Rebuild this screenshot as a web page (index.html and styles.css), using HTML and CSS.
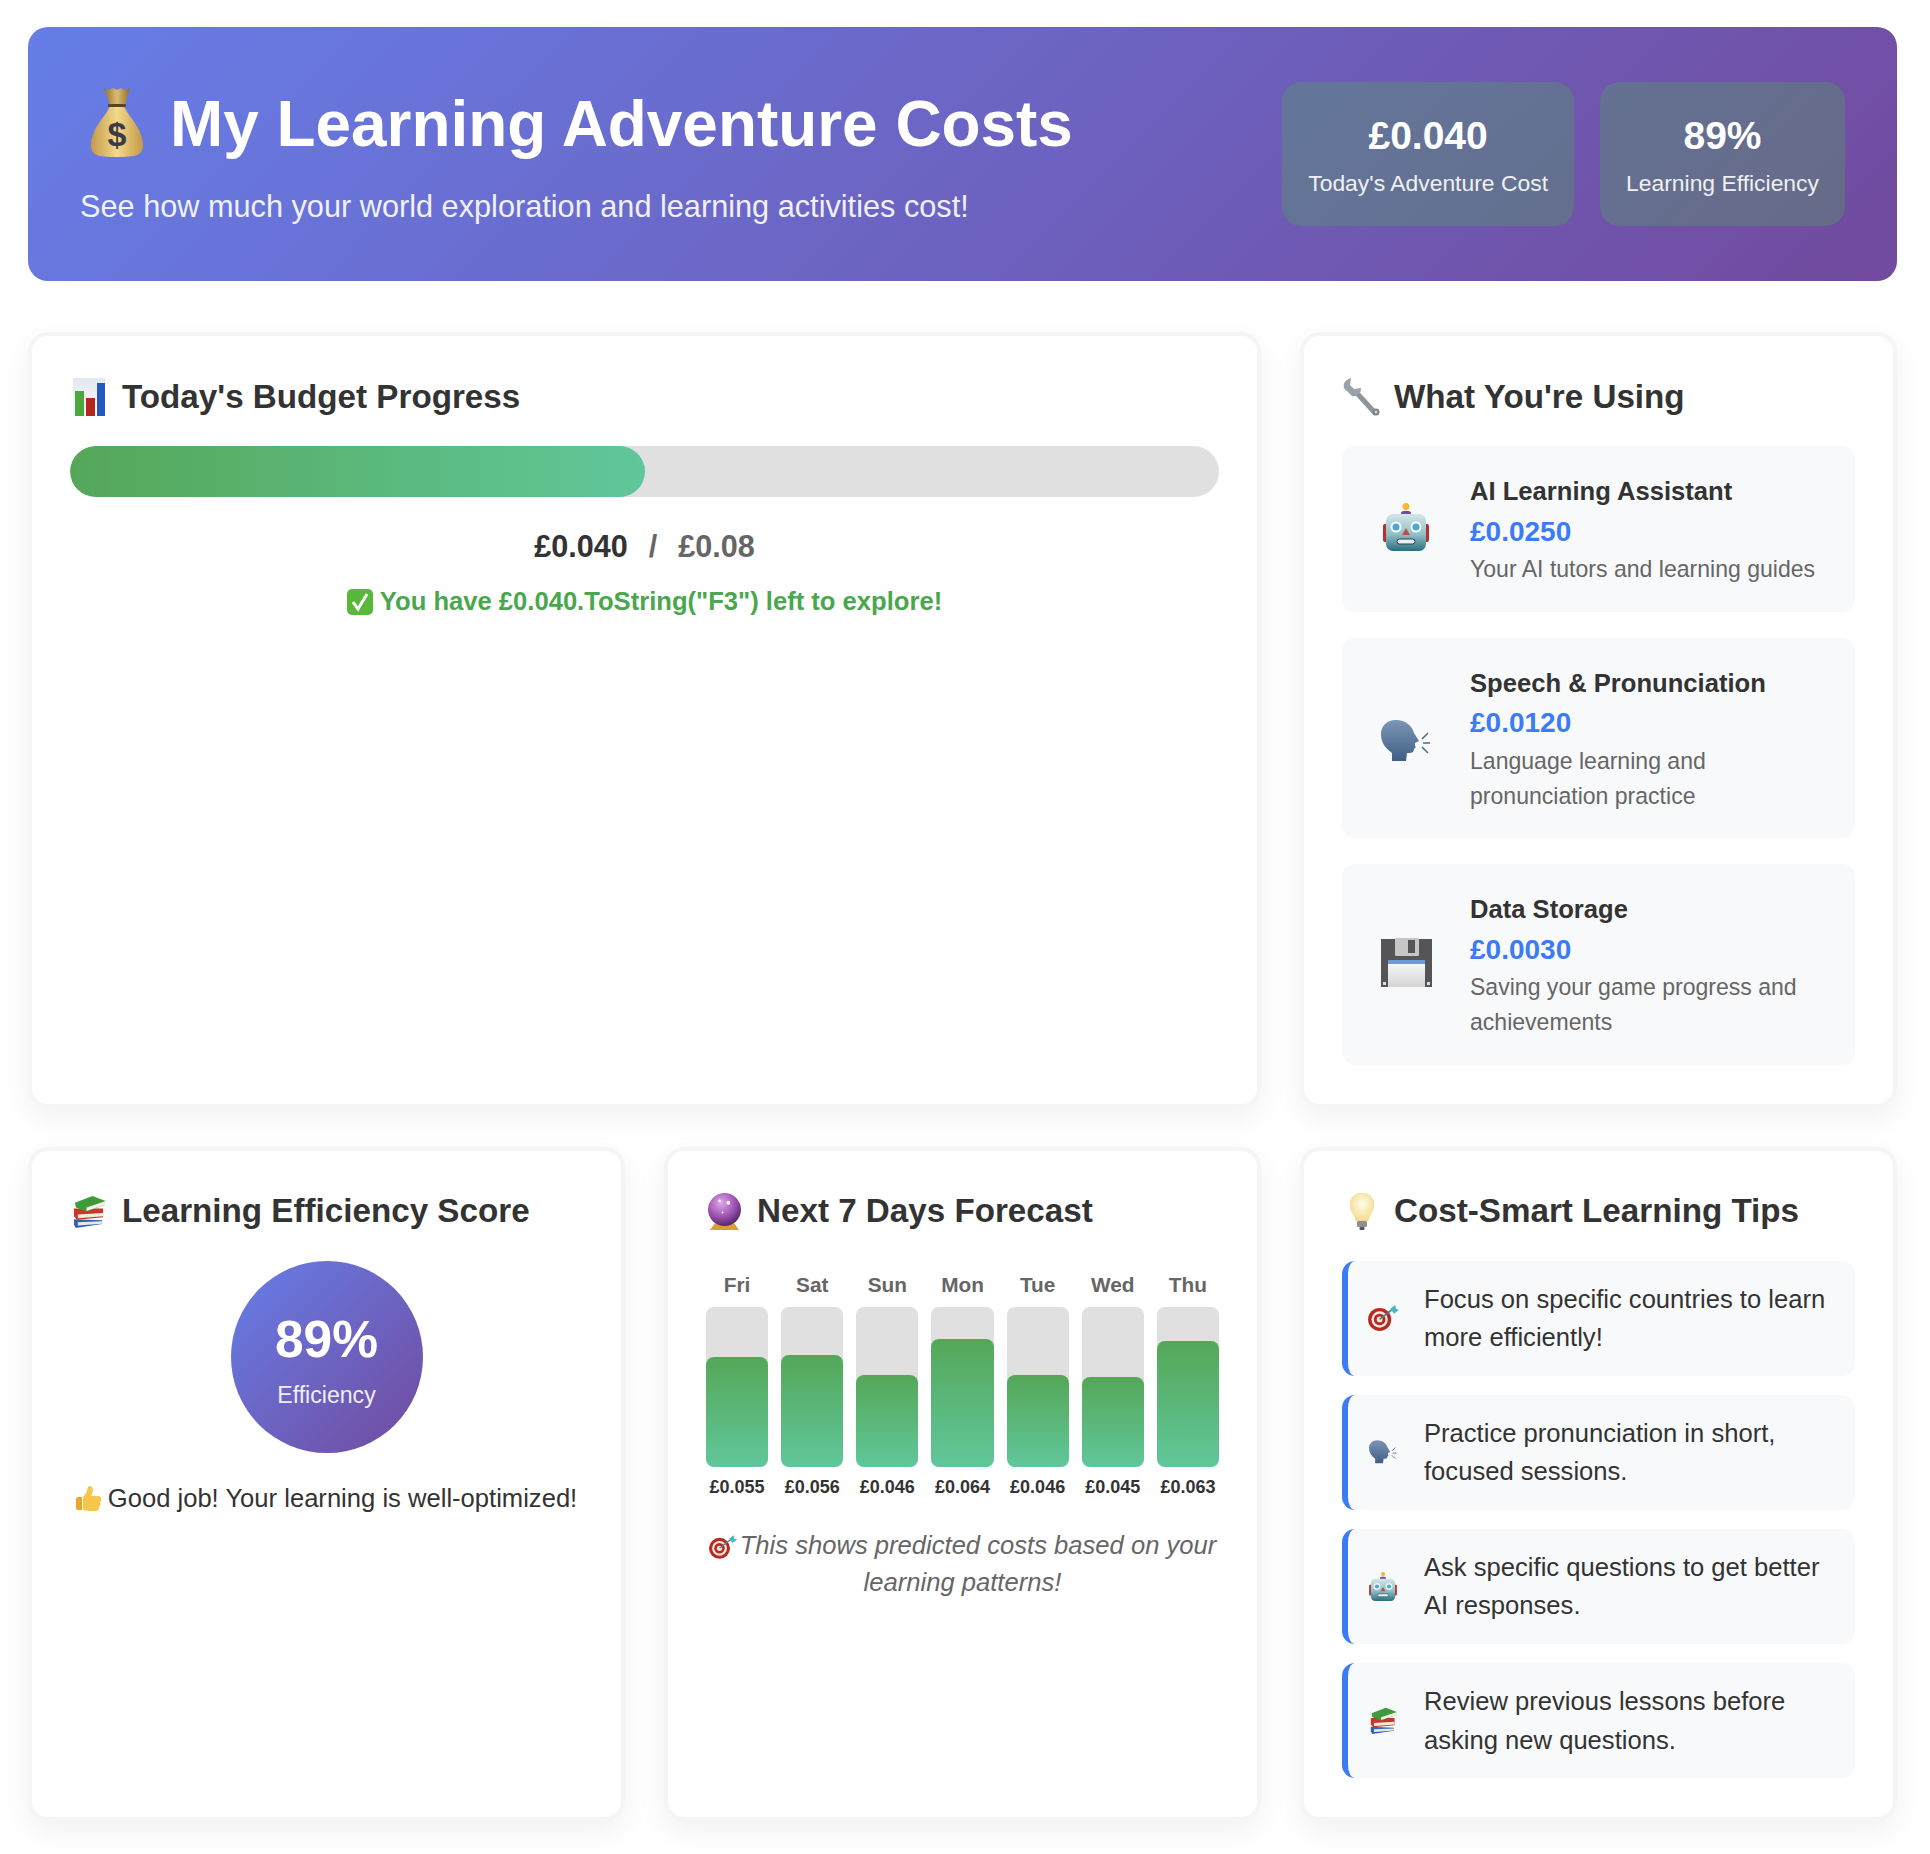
FILE: index.html
```html
<!DOCTYPE html>
<html lang="en">
<head>
    <meta charset="UTF-8">
    <meta name="viewport" content="width=device-width, initial-scale=1.0">
    <title>My Learning Adventure Costs</title>
    <link rel="stylesheet" href="styles.css">
</head>
<body>
    <!-- emoji drawn once, used everywhere -->
    <svg class="defs" aria-hidden="true">
        <defs>
            <linearGradient id="g-bag" x1="0" y1="0" x2="1" y2="0">
                <stop offset="0" stop-color="#c39a48"/><stop offset=".5" stop-color="#f2d98c"/><stop offset="1" stop-color="#c39a48"/>
            </linearGradient>
            <linearGradient id="g-neck" x1="0" y1="0" x2="1" y2="0">
                <stop offset="0" stop-color="#8f6f30"/><stop offset=".5" stop-color="#dcbc70"/><stop offset="1" stop-color="#8f6f30"/>
            </linearGradient>
            <linearGradient id="g-chart" x1="0" y1="0" x2="0" y2="1">
                <stop offset="0" stop-color="#e2e8f0"/><stop offset="1" stop-color="#fafbfc"/>
            </linearGradient>
            <linearGradient id="g-head" x1="0" y1="0" x2="0" y2="1">
                <stop offset="0" stop-color="#7d95b5"/><stop offset="1" stop-color="#3f5f85"/>
            </linearGradient>
            <linearGradient id="g-robot" x1="0" y1="0" x2="0" y2="1">
                <stop offset="0" stop-color="#d5e6ea"/><stop offset=".55" stop-color="#8fc0c8"/><stop offset="1" stop-color="#2a6f80"/>
            </linearGradient>
            <linearGradient id="g-disk" x1="0" y1="0" x2="0" y2="1">
                <stop offset="0" stop-color="#fbfbfb"/><stop offset="1" stop-color="#d4d4d4"/>
            </linearGradient>
            <radialGradient id="g-ball" cx=".4" cy=".3" r=".8">
                <stop offset="0" stop-color="#dfa8e8"/><stop offset=".55" stop-color="#9a4fb0"/><stop offset="1" stop-color="#3c1a52"/>
            </radialGradient>
            <radialGradient id="g-bulb" cx=".5" cy=".4" r=".6">
                <stop offset="0" stop-color="#fffce8"/><stop offset="1" stop-color="#f3dc8e"/>
            </radialGradient>
        </defs>
        <symbol id="e-bag" viewBox="0 0 52 70">
            <path d="M13 1l5 2 4-2 4 2 4-2 4 2 5-2-5 17H19z" fill="url(#g-neck)"/>
            <path d="M19 19h14c3 9 19 22 19 40 0 9-7 11-26 11S0 68 0 59c0-18 16-31 19-40z" fill="url(#g-bag)"/>
            <rect x="17" y="17" width="18" height="3" rx="1" fill="#5a4320"/>
        </symbol>
        <symbol id="e-chart" viewBox="0 0 32 38">
            <rect width="32" height="38" fill="url(#g-chart)"/>
            <rect x="2" y="13" width="9" height="25" fill="#4aa83c"/>
            <rect x="13" y="20" width="9" height="18" fill="#b5261e"/>
            <rect x="24" y="5" width="8" height="33" fill="#2358bd"/>
        </symbol>
        <symbol id="e-check" viewBox="0 0 26 26">
            <rect width="26" height="26" rx="5" fill="#58b83a"/>
            <path d="M6 13l5 7 9-15" fill="none" stroke="#fff" stroke-width="3"/>
        </symbol>
        <symbol id="e-wrench" viewBox="0 0 38 38">
            <path d="M34 36L13 13" stroke="#8d949c" stroke-width="5" fill="none"/>
            <path d="M9 0l-1 7 4 4 7-1c0 6-4 9-9 8L5 13C1 12-1 3 9 0z" fill="#9aa1a9"/>
            <circle cx="34" cy="34" r="3.5" fill="#7d848c"/>
            <circle cx="34" cy="34" r="1.3" fill="#ddd"/>
        </symbol>
        <symbol id="e-robot" viewBox="0 0 46 48">
            <circle cx="23" cy="3.5" r="3.5" fill="#f4b93a"/>
            <path d="M18 10c0-3 10-3 10 0v2H18z" fill="#6b4f9c"/>
            <rect y="21" width="5" height="18" rx="2" fill="#b8302a"/>
            <rect x="41" y="21" width="5" height="18" rx="2" fill="#b8302a"/>
            <rect x="3" y="11" width="40" height="37" rx="7" fill="url(#g-robot)"/>
            <circle cx="13" cy="24" r="5.5" fill="#fff"/><circle cx="13" cy="24" r="3.5" fill="#48a8d8"/>
            <circle cx="33" cy="24" r="5.5" fill="#fff"/><circle cx="33" cy="24" r="3.5" fill="#48a8d8"/>
            <path d="M23 25l4 7h-8z" fill="#c84a3c"/>
            <rect x="14" y="36" width="18" height="5" rx="2.5" fill="#eee" stroke="#245" stroke-width="1"/>
        </symbol>
        <symbol id="e-head" viewBox="0 0 50 42">
            <path d="M15 0c10 0 16 6 18 13l5 8-4 2v3l1 1-2 2c0 4-3 4-7 4l-1 8H11v-8C4 28 0 22 0 14 0 6 6 0 15 0z" fill="url(#g-head)"/>
            <path d="M47 13l-6 6M42 23h7M41 27l6 6" stroke="#4d6d92" stroke-width="1.6" fill="none"/>
        </symbol>
        <symbol id="e-disk" viewBox="0 0 51 49">
            <path d="M0 1h51v48H0z" fill="#555558"/>
            <rect x="14" y="0" width="24" height="18" rx="1" fill="#c6c6c6"/>
            <rect x="27" y="2" width="7" height="13" fill="#555558"/>
            <rect x="7" y="22" width="37" height="27" fill="url(#g-disk)"/>
            <rect x="7" y="22" width="37" height="4" fill="#6e9bd8"/>
            <rect x="2" y="44" width="3" height="3" fill="#ddd"/>
            <rect x="46" y="44" width="3" height="3" fill="#ddd"/>
        </symbol>
        <symbol id="e-books" viewBox="0 0 34 34">
            <path d="M1 25l29 1v4L3 34l-2-3z" fill="#3562ad"/>
            <path d="M5 28l25-1v2.500L5 31.500z" fill="#e8e8e8"/>
            <path d="M1 14h30v9L4 25.500 1 22z" fill="#c9372a"/>
            <path d="M5 20l26-1.500V22L5 24z" fill="#f2ece0"/>
            <path d="M2 8l18-7 13 5v4l-19 7-11-4z" fill="#3f9a3c"/>
            <path d="M14 13l19-6.500V10l-19 6.500z" fill="#f4f0e6"/>
        </symbol>
        <symbol id="e-ball" viewBox="0 0 34 38">
            <path d="M7 31h20l5 7H2z" fill="#d3a13a"/>
            <circle cx="17" cy="17" r="17" fill="url(#g-ball)"/>
            <circle cx="12" cy="8" r="1.4" fill="#fff"/><circle cx="21" cy="10" r="2" fill="#fff"/><circle cx="15" cy="20" r="1" fill="#fff"/>
        </symbol>
        <symbol id="e-dart" viewBox="0 0 32 27">
            <circle cx="12" cy="15" r="12" fill="#b72a22"/>
            <circle cx="12" cy="15" r="8.500" fill="#f3e7dd"/>
            <circle cx="12" cy="15" r="6" fill="#b72a22"/>
            <circle cx="12" cy="15" r="3" fill="#f3e7dd"/>
            <path d="M12 15L26 4" stroke="#4f7f8a" stroke-width="1.600"/>
            <path d="M23 4l5-4 1 4 3 1-5 4z" fill="#4db4c2"/>
        </symbol>
        <symbol id="e-bulb" viewBox="0 0 24 37">
            <path d="M12 0c7 0 12 5 12 12 0 6-5 9-6 16H6C5 21 0 18 0 12 0 5 5 0 12 0z" fill="url(#g-bulb)" stroke="#ecd27a" stroke-width=".6"/>
            <rect x="7" y="28" width="10" height="6" rx="1.500" fill="#8e8e8e"/>
            <rect x="9.500" y="34" width="5" height="3" rx="1" fill="#555"/>
        </symbol>
        <symbol id="e-thumb" viewBox="0 0 25 25">
            <path d="M2 11h4v13H2c-1 0-2-1-2-2V13c0-1 1-2 2-2z" fill="#e9a52e"/>
            <path d="M7 11c3-3 4-6 5-10 1-2 5-1 5 3 0 2-1 4-2 6h7c4 0 4 5 2 6 1 2 0 4-1 5 0 2-1 3-2 4-2 1-10 0-14-1z" fill="#f7c44c"/>
        </symbol>
    </svg>

    <header class="hero">
        <div class="hero-text">
            <h1><svg class="emoji-bag" viewBox="0 0 52 70"><use href="#e-bag"/><text x="26" y="59" class="bag-sign">$</text></svg>My Learning Adventure Costs</h1>
            <p>See how much your world exploration and learning activities cost!</p>
        </div>
        <div class="hero-stats">
            <div class="stat stat-cost">
                <div class="stat-value">£0.040</div>
                <div class="stat-label">Today's Adventure Cost</div>
            </div>
            <div class="stat stat-eff">
                <div class="stat-value">89%</div>
                <div class="stat-label">Learning Efficiency</div>
            </div>
        </div>
    </header>

    <main class="dashboard">
        <section class="card span-2">
            <h2 class="card-title"><svg class="t-chart"><use href="#e-chart"/></svg>Today's Budget Progress</h2>
            <div class="budget-track"><div class="budget-fill" style="width: 50%"></div></div>
            <div class="budget-numbers"><span class="spent">£0.040</span><span class="slash">/</span><span class="limit">£0.08</span></div>
            <div class="budget-status"><svg class="check"><use href="#e-check"/></svg>You have £0.040.ToString("F3") left to explore!</div>
        </section>

        <section class="card">
            <h2 class="card-title"><svg class="t-wrench"><use href="#e-wrench"/></svg>What You're Using</h2>
            <div class="usage-list">
                <div class="usage-item">
                    <div class="usage-icon"><svg class="u-robot"><use href="#e-robot"/></svg></div>
                    <div>
                        <div class="usage-name">AI Learning Assistant</div>
                        <div class="usage-cost">£0.0250</div>
                        <div class="usage-desc">Your AI tutors and learning guides</div>
                    </div>
                </div>
                <div class="usage-item">
                    <div class="usage-icon"><svg class="u-head"><use href="#e-head"/></svg></div>
                    <div>
                        <div class="usage-name">Speech &amp; Pronunciation</div>
                        <div class="usage-cost">£0.0120</div>
                        <div class="usage-desc">Language learning and pronunciation practice</div>
                    </div>
                </div>
                <div class="usage-item">
                    <div class="usage-icon"><svg class="u-disk"><use href="#e-disk"/></svg></div>
                    <div>
                        <div class="usage-name">Data Storage</div>
                        <div class="usage-cost">£0.0030</div>
                        <div class="usage-desc">Saving your game progress and achievements</div>
                    </div>
                </div>
            </div>
        </section>

        <section class="card">
            <h2 class="card-title"><svg class="t-books"><use href="#e-books"/></svg>Learning Efficiency Score</h2>
            <div class="score-circle">
                <div class="score-value">89%</div>
                <div class="score-label">Efficiency</div>
            </div>
            <div class="score-note"><svg class="thumb"><use href="#e-thumb"/></svg>Good job! Your learning is well-optimized!</div>
        </section>

        <section class="card">
            <h2 class="card-title"><svg class="t-ball"><use href="#e-ball"/></svg>Next 7 Days Forecast</h2>
            <div class="forecast">
                <div class="day"><div class="day-name">Fri</div><div class="day-track"><div class="day-fill" style="height: 68.75%"></div></div><div class="day-value">£0.055</div></div>
                <div class="day"><div class="day-name">Sat</div><div class="day-track"><div class="day-fill" style="height: 70%"></div></div><div class="day-value">£0.056</div></div>
                <div class="day"><div class="day-name">Sun</div><div class="day-track"><div class="day-fill" style="height: 56.9%"></div></div><div class="day-value">£0.046</div></div>
                <div class="day"><div class="day-name">Mon</div><div class="day-track"><div class="day-fill" style="height: 80%"></div></div><div class="day-value">£0.064</div></div>
                <div class="day"><div class="day-name">Tue</div><div class="day-track"><div class="day-fill" style="height: 57.5%"></div></div><div class="day-value">£0.046</div></div>
                <div class="day"><div class="day-name">Wed</div><div class="day-track"><div class="day-fill" style="height: 56.25%"></div></div><div class="day-value">£0.045</div></div>
                <div class="day"><div class="day-name">Thu</div><div class="day-track"><div class="day-fill" style="height: 78.75%"></div></div><div class="day-value">£0.063</div></div>
            </div>
            <p class="forecast-note"><svg class="note-dart"><use href="#e-dart"/></svg>This shows predicted costs based on your learning patterns!</p>
        </section>

        <section class="card">
            <h2 class="card-title"><svg class="t-bulb"><use href="#e-bulb"/></svg>Cost-Smart Learning Tips</h2>
            <div class="tips">
                <div class="tip"><div class="tip-icon"><svg class="tip-dart"><use href="#e-dart"/></svg></div><div>Focus on specific countries to learn more efficiently!</div></div>
                <div class="tip"><div class="tip-icon"><svg class="tip-head"><use href="#e-head"/></svg></div><div>Practice pronunciation in short, focused sessions.</div></div>
                <div class="tip"><div class="tip-icon"><svg class="tip-robot"><use href="#e-robot"/></svg></div><div>Ask specific questions to get better AI responses.</div></div>
                <div class="tip"><div class="tip-icon"><svg class="tip-books"><use href="#e-books"/></svg></div><div>Review previous lessons before asking new questions.</div></div>
            </div>
        </section>
    </main>
</body>
</html>
```

FILE: styles.css
```css
* {
    box-sizing: border-box;
}

body {
    margin: 0;
    padding: 27px 33px 30px 28px;
    background: #fff;
    color: #333;
    font-family: "Liberation Sans", Arial, sans-serif;
    line-height: 1.5;
}

.defs {
    width: 0;
    height: 0;
}

svg {
    display: block;
    flex: none;
}

.bag-sign {
    font-family: "Liberation Sans", sans-serif;
    font-size: 34px;
    font-weight: bold;
    fill: #3c3a44;
    text-anchor: middle;
}

/* header */
.hero {
    display: flex;
    justify-content: space-between;
    align-items: center;
    height: 254px;
    padding: 0 52px;
    border-radius: 20px;
    background: linear-gradient(135deg, #667ee8 0%, #724a9e 100%);
    color: #fff;
}

.hero-text {
    padding-top: 7px;
}

.hero h1 {
    display: flex;
    align-items: center;
    margin: 0 0 22px;
    font-size: 63.9px;
    line-height: 76px;
}

.emoji-bag {
    width: 52px;
    height: 70px;
    margin: -4px 27px 0 11px;
}

.hero p {
    margin: 0;
    font-size: 30.7px;
    line-height: 46px;
    opacity: 0.9;
}

.hero-stats {
    display: flex;
    gap: 26px;
}

.stat {
    height: 144px;
    padding: 0 26px;
    border-radius: 19.5px;
    background: rgba(76, 175, 80, 0.3);
    text-align: center;
}

.stat-value {
    margin-top: 28px;
    font-size: 39px;
    font-weight: bold;
    line-height: 52px;
}

.stat-label {
    margin-top: 4px;
    font-size: 22.9px;
    line-height: 34px;
    opacity: 0.9;
}

/* grid */
.dashboard {
    display: grid;
    grid-template-columns: repeat(3, 1fr);
    gap: 39px;
    margin-top: 51px;
}

.span-2 {
    grid-column: span 2;
}

.card {
    padding: 39px 38px;
    border: 4px solid #f5f5f5;
    border-radius: 20px;
    background: #fff;
    box-shadow: 0 10px 30px rgba(0, 0, 0, 0.06);
}

.card-title {
    display: flex;
    align-items: center;
    height: 43px;
    margin: 0 0 28px;
    font-size: 33.2px;
    color: #333;
}

.t-chart { width: 32px; height: 38px; margin: 0 17px 0 3px; }
.t-wrench { width: 38px; height: 38px; margin: 0 14px 0 0; }
.t-books { width: 33px; height: 33px; margin: 0 16px 0 3px; }
.t-ball { width: 33px; height: 37px; margin: 0 16px 0 2px; }
.t-bulb { width: 24px; height: 37px; margin: 0 20px 0 8px; }

/* budget */
.budget-track {
    height: 51px;
    border-radius: 26px;
    background: #e0e0e0;
    overflow: hidden;
}

.budget-fill {
    height: 100%;
    border-radius: 26px;
    background: linear-gradient(90deg, #55a758, #60c79b);
}

.budget-numbers {
    margin-top: 26px;
    font-size: 30.6px;
    font-weight: bold;
    line-height: 46px;
    text-align: center;
}

.slash {
    margin: 0 21px;
    color: #666;
}

.limit {
    color: #666;
}

.budget-status {
    display: flex;
    justify-content: center;
    align-items: center;
    margin-top: 13px;
    font-size: 25.6px;
    font-weight: bold;
    line-height: 39px;
    color: #4aa74e;
}

.check {
    width: 26px;
    height: 26px;
    margin-right: 7px;
}

/* usage */
.usage-list {
    display: flex;
    flex-direction: column;
    gap: 26px;
}

.usage-item {
    display: flex;
    align-items: center;
    gap: 26px;
    padding: 26px 26px 24.5px;
    border-radius: 13px;
    background: #f8f9fa;
}

.usage-icon {
    display: flex;
    justify-content: center;
    width: 76px;
    flex: none;
}

.u-robot { width: 46px; height: 48px; margin-top: -6px; }
.u-head { width: 50px; height: 42px; margin-top: 5px; }
.u-disk { width: 51px; height: 49px; margin-top: -5px; }

.usage-name {
    font-size: 25.6px;
    font-weight: bold;
    line-height: 39.5px;
}

.usage-cost {
    font-size: 28px;
    font-weight: bold;
    line-height: 40.5px;
    color: #3b7cf6;
}

.usage-desc {
    font-size: 23.05px;
    line-height: 35px;
    color: #666;
}

/* score */
.score-circle {
    display: flex;
    flex-direction: column;
    align-items: center;
    justify-content: center;
    width: 192px;
    height: 192px;
    margin: 0 auto 26px;
    padding-top: 6px;
    border-radius: 50%;
    background: linear-gradient(135deg, #667ee8 0%, #724a9e 100%);
    color: #fff;
}

.score-value {
    font-size: 51.5px;
    font-weight: bold;
    line-height: 64px;
}

.score-label {
    margin-top: 6px;
    font-size: 23.1px;
    line-height: 36px;
    opacity: 0.9;
}

.score-note {
    display: flex;
    justify-content: center;
    align-items: center;
    font-size: 25.6px;
    line-height: 39px;
}

.thumb {
    width: 25px;
    height: 25px;
    margin-right: 7px;
}

/* forecast */
.forecast {
    display: grid;
    grid-template-columns: repeat(7, 1fr);
    gap: 13px;
    margin-top: 36px;
}

.day {
    text-align: center;
}

.day-name {
    font-size: 20.8px;
    font-weight: bold;
    line-height: 31px;
    color: #666;
}

.day-track {
    display: flex;
    align-items: flex-end;
    height: 160px;
    margin-top: 7px;
    border-radius: 8px;
    background: #e0e0e0;
}

.day-fill {
    width: 100%;
    border-radius: 8px;
    background: linear-gradient(180deg, #55a758, #60c79b);
}

.day-value {
    margin-top: 7px;
    font-size: 18px;
    font-weight: bold;
    line-height: 27px;
}

.forecast-note {
    margin: 26px 0 0;
    font-size: 25.6px;
    font-style: italic;
    line-height: 37.5px;
    text-align: center;
    color: #666;
}

.note-dart {
    display: inline-block;
    width: 28px;
    height: 24px;
    margin-right: 3px;
    vertical-align: -5px;
}

/* tips */
.tips {
    display: flex;
    flex-direction: column;
    gap: 19px;
}

.tip {
    display: flex;
    align-items: center;
    gap: 26px;
    padding: 19.2px 20px;
    border-left: 6.5px solid #3b7cf6;
    border-radius: 13px;
    background: #f8f9fa;
    font-size: 25.6px;
    line-height: 38.4px;
}

.tip-icon {
    display: flex;
    justify-content: center;
    width: 30px;
    flex: none;
}

.tip-dart { width: 31px; height: 26px; }
.tip-head { width: 28px; height: 24px; }
.tip-robot { width: 28px; height: 29px; }
.tip-books { width: 27px; height: 27px; }
```
